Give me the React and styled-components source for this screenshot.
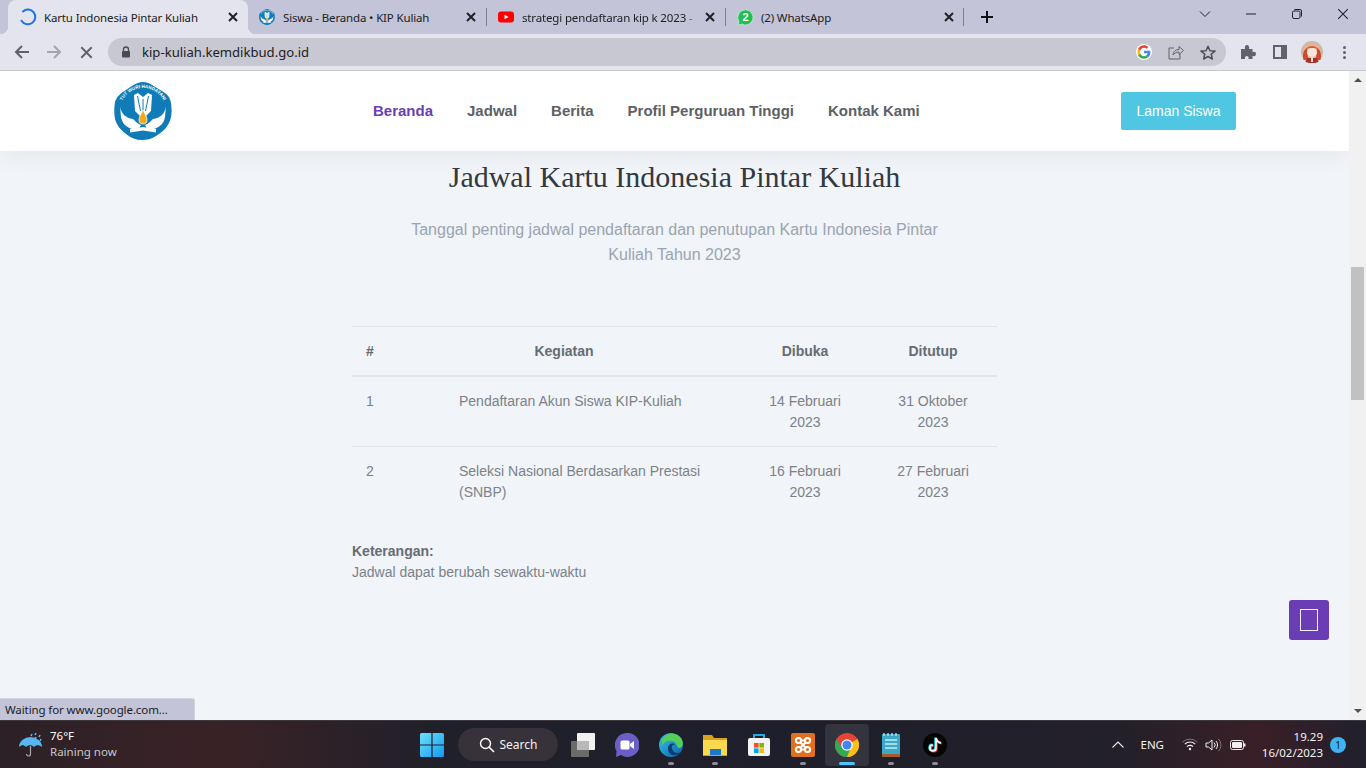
import React from "react"
import styled, { createGlobalStyle } from "styled-components"

const GlobalStyle = createGlobalStyle`
  html, body { margin: 0; padding: 0; height: 100%; overflow: hidden; }
  body { font-family: "Liberation Sans", Arial, sans-serif; }
  * { box-sizing: border-box; }
`

const tabs = [
  { title: "Kartu Indonesia Pintar Kuliah", icon: "spinner", active: true },
  { title: "Siswa - Beranda • KIP Kuliah", icon: "logo" },
  { title: "strategi pendaftaran kip k 2023 -", icon: "youtube", fade: true, divider: true },
  { title: "(2) WhatsApp", icon: "whatsapp", divider: true, last: true },
]

const menu = ["Beranda", "Jadwal", "Berita", "Profil Perguruan Tinggi", "Kontak Kami"]

const rows = [
  { no: 1, name: "Pendaftaran Akun Siswa KIP-Kuliah", open: "14 Februari 2023", close: "31 Oktober 2023" },
  { no: 2, name: "Seleksi Nasional Berdasarkan Prestasi (SNBP)", open: "16 Februari 2023", close: "27 Februari 2023" },
]

const Logo = ({ size = 58 }) => (
  <svg width={size} height={size} viewBox="0 0 58 58">
    <path d="M29 0 C35 0 41 5 48 9 C53 12 56 15 57 21 C58 28 58 35 55 41 C52 47 48 50 42 54 C37 57 33 58 28 58 C22 58 17 56 12 52 C7 48 3 44 1 37 C0 31 0 26 1 20 C3 14 7 11 12 8 C18 4 23 0 29 0 Z" fill="#0f7cb8" />
    <defs>
      <path id="logoArc" d="M6 29 A23 23 0 0 1 52 29" />
    </defs>
    <text fontFamily="Liberation Sans" fontSize="4.6" fontWeight="700" fill="#fff">
      <textPath href="#logoArc" startOffset="50%" textAnchor="middle">TUT WURI HANDAYANI</textPath>
    </text>
    <path d="M20 13 L24 11 L29 15 L34 11 L38 13 L37 29 L29 37 L21 29 Z" fill="#fff" />
    <path d="M23.5 14 L26.5 29 M29 17 V30 M34.5 14 L31.5 29" stroke="#0f7cb8" strokeWidth="1" />
    <path d="M6 24 C7 32 12 36 19 37 C22 40 24 42 27 43 L24 48 C16 48 8 43 7 35 Z" fill="#fff" />
    <path d="M52 24 C51 32 46 36 39 37 C36 40 34 42 31 43 L34 48 C42 48 50 43 51 35 Z" fill="#fff" />
    <path d="M29 28 C31 32 33 35 33 38 C33 41 31 42 29 42 C27 42 25 41 25 38 C25 35 27 32 29 28 Z" fill="#f5a81c" stroke="#fff" strokeWidth=".8" />
    <path d="M16 47 L29 45 L42 47 L42 50.5 L29 48.5 L16 50.5 Z" fill="#fff" />
  </svg>
)

const Favicon = ({ type }) => {
  if (type === "spinner") {
    return (
      <svg width="18" height="18" viewBox="0 0 18 18">
        <path d="M5 2.6 A7.4 7.4 0 1 1 2 11.5" fill="none" stroke="#1a73e8" strokeWidth="2" strokeLinecap="round" transform="rotate(-10 9 9)" />
      </svg>
    )
  }
  if (type === "logo") return <Logo size={16} />
  if (type === "youtube") {
    return (
      <svg width="18" height="18" viewBox="0 0 18 18">
        <rect x="1" y="3.5" width="16" height="11" rx="3" fill="#f00" />
        <path d="M7.5 6.8 L11.5 9 L7.5 11.2 Z" fill="#fff" />
      </svg>
    )
  }
  return (
    <svg width="17" height="17" viewBox="0 0 17 17">
      <path d="M8.5 .8 A7.6 7.6 0 1 1 4.7 15 L.8 16.2 L2 12.4 A7.6 7.6 0 0 1 8.5 .8 Z" fill="#1fc04f" stroke="#e8f8ec" strokeWidth=".6" />
      <text x="8.5" y="12.2" textAnchor="middle" fontFamily="Liberation Sans" fontWeight="700" fontSize="11" fill="#fff">2</text>
    </svg>
  )
}

const CloseIcon = ({ size = 10, color = "#202124", weight = 2 }) => (
  <svg width={size} height={size} viewBox="0 0 10 10">
    <path d="M1 1 L9 9 M9 1 L1 9" stroke={color} strokeWidth={weight} fill="none" />
  </svg>
)

const Avatar = () => (
  <svg width="22" height="22" viewBox="0 0 22 22">
    <circle cx="11" cy="11" r="11" fill="#cdb9a6" />
    <path d="M4 6 C6 2 16 2 18 6 L20 16 L2 16 Z" fill="#e9b49c" />
    <path d="M2.5 19 C1 13 3 8 6 7 L7 17 L5 19 Z M19.5 19 C21 13 19 8 16 7 L15 17 L17 19 Z" fill="#d2492c" />
    <path d="M5 8 C7 4 15 4 17 8 C14 6.5 8 6.5 5 8 Z" fill="#de5b39" />
    <ellipse cx="11" cy="11.5" rx="5" ry="4.5" fill="#f2e7de" />
    <path d="M6 17 H16 L17.5 21 C14 22.5 8 22.5 4.5 21 Z" fill="#a82e28" />
    <path d="M10 16 H12 V21 H10 Z" fill="#eadfd5" />
  </svg>
)

const WindowsIcon = () => (
  <svg width="24" height="24" viewBox="0 0 24 24">
    <defs>
      <linearGradient id="winGrad" x1="0" y1="0" x2="1" y2="1">
        <stop offset="0" stopColor="#6fe0fb" />
        <stop offset="1" stopColor="#0f9bf0" />
      </linearGradient>
    </defs>
    <path d="M0 1.5 A1.5 1.5 0 0 1 1.5 0 H11.4 V11.4 H0 Z M12.6 0 H22.5 A1.5 1.5 0 0 1 24 1.5 V11.4 H12.6 Z M0 12.6 H11.4 V24 H1.5 A1.5 1.5 0 0 1 0 22.5 Z M12.6 12.6 H24 V22.5 A1.5 1.5 0 0 1 22.5 24 H12.6 Z" fill="url(#winGrad)" />
  </svg>
)

const appIcons = {
  taskview: (
    <svg width="24" height="24" viewBox="0 0 24 24">
      <rect x="0" y="8" width="18" height="16" rx="1" fill="#6b6b6b" />
      <rect x="6" y="0" width="18" height="17" rx="1" fill="#f1f1f1" />
      <rect x="6" y="8" width="12" height="9" fill="#b9b9b9" />
    </svg>
  ),
  meet: (
    <svg width="24" height="24" viewBox="0 0 24 24">
      <path d="M12 0 A12 12 0 1 1 6 22 L1 24 L1.5 18 A12 12 0 0 1 12 0 Z" fill="#6a5fc4" />
      <rect x="5.5" y="7.5" width="9" height="9" rx="1.5" fill="#fff" />
      <path d="M15 11 L19 8 V16 L15 13 Z" fill="#fff" />
    </svg>
  ),
  edge: (
    <svg width="24" height="24" viewBox="0 0 24 24">
      <defs>
        <linearGradient id="edgeGrad" x1="0" y1="0" x2="1" y2="1">
          <stop offset="0" stopColor="#37c7e8" />
          <stop offset="1" stopColor="#0b5ea8" />
        </linearGradient>
      </defs>
      <circle cx="12" cy="12" r="12" fill="url(#edgeGrad)" />
      <path d="M3 7 C6 0 17 -2 22 5 C25 9 24 15 20 15 C17 15 19 9 13 8 C8 7 4 9 3 13 Z" fill="#54d05a" />
      <path d="M9 15 C9 11 14 9 16 12 C12 11 12 16 15 19 C18 21 21 20 22 18 C19 24 9 24 9 15 Z" fill="#0c3a74" />
    </svg>
  ),
  folder: (
    <svg width="24" height="24" viewBox="0 0 24 24">
      <path d="M0 2 H9 L11 5 H24 V23 H0 Z" fill="#d9a21f" />
      <path d="M0 7 H24 V23 H0 Z" fill="#fbd84e" />
      <path d="M7 16 H18 V23 H7 Z" fill="#1b79c9" />
      <path d="M0 22 H24 V23 H0 Z" fill="#d8a21d" />
    </svg>
  ),
  store: (
    <svg width="24" height="24" viewBox="0 0 24 24">
      <path d="M7 6 V2 H17 V6" fill="none" stroke="#27a9e6" strokeWidth="2" />
      <rect x="1" y="5" width="22" height="18" rx="2" fill="#f3f3f3" />
      <rect x="7" y="10" width="4.6" height="4.6" fill="#f25022" />
      <rect x="12.4" y="10" width="4.6" height="4.6" fill="#7fba00" />
      <rect x="7" y="15.4" width="4.6" height="4.6" fill="#00a4ef" />
      <rect x="12.4" y="15.4" width="4.6" height="4.6" fill="#ffb900" />
    </svg>
  ),
  xampp: (
    <svg width="24" height="24" viewBox="0 0 24 24">
      <rect width="24" height="24" rx="2" fill="#e0701f" />
      <circle cx="7.5" cy="7.5" r="2.6" fill="none" stroke="#fff" strokeWidth="2" />
      <circle cx="16.5" cy="7.5" r="2.6" fill="none" stroke="#fff" strokeWidth="2" />
      <circle cx="7.5" cy="16.5" r="2.6" fill="none" stroke="#fff" strokeWidth="2" />
      <circle cx="16.5" cy="16.5" r="2.6" fill="none" stroke="#fff" strokeWidth="2" />
      <path d="M10 7.5 H14 M10 16.5 H14 M9.5 9.5 L12 12 L14.5 9.5 M9.5 14.5 L12 12 L14.5 14.5" fill="none" stroke="#fff" strokeWidth="2" />
    </svg>
  ),
  chrome: (
    <svg width="24" height="24" viewBox="0 0 24 24">
      <circle cx="12" cy="12" r="12" fill="#e94335" />
      <path d="M12 12 L22.4 6 A12 12 0 0 1 12 24 Z" fill="#fbc116" />
      <path d="M16 14 L12 24 A12 12 0 0 1 1.6 6 L7 15 Z" fill="#34a853" />
      <circle cx="12" cy="12" r="5.8" fill="#fff" />
      <circle cx="12" cy="12" r="4.5" fill="#4285f4" />
    </svg>
  ),
  notepad: (
    <svg width="24" height="24" viewBox="0 0 24 24">
      <rect x="3" y="1" width="18" height="22" rx="1" fill="#3aa8c9" />
      <path d="M3 21 H21 V24 H3 Z" fill="#a65c26" />
      <path d="M6 7 H18 M6 11 H18 M6 15 H18" stroke="#c7ecf5" strokeWidth="1.4" />
      <path d="M5 0 V3 M9 0 V3 M13 0 V3 M17 0 V3" stroke="#d8eef4" strokeWidth="1.2" />
    </svg>
  ),
  tiktok: (
    <svg width="24" height="24" viewBox="0 0 24 24">
      <circle cx="12" cy="12" r="12" fill="#050505" />
      <path d="M13 5 V15 A3 3 0 1 1 10 12 M13 5 C13.5 8 15.5 9.5 18 10" fill="none" stroke="#25f4ee" strokeWidth="2" transform="translate(-.7 -.5)" />
      <path d="M13 5 V15 A3 3 0 1 1 10 12 M13 5 C13.5 8 15.5 9.5 18 10" fill="none" stroke="#fe2c55" strokeWidth="2" transform="translate(.7 .5)" />
      <path d="M13 5 V15 A3 3 0 1 1 10 12 M13 5 C13.5 8 15.5 9.5 18 10" fill="none" stroke="#fff" strokeWidth="1.6" />
    </svg>
  ),
}

const taskbarApps = [
  { name: "taskview" },
  { name: "meet" },
  { name: "edge", open: true },
  { name: "folder", open: true },
  { name: "store" },
  { name: "xampp", open: true },
  { name: "chrome", open: true, current: true },
  { name: "notepad", open: true },
  { name: "tiktok", open: true },
]

const App = () => {
  return (
    <Screen>
      <GlobalStyle />
      <TabStrip>
        {tabs.map((tab) => (
          <Tab key={tab.title} $active={tab.active} $divider={tab.divider} $last={tab.last}>
            <TabIcon><Favicon type={tab.icon} /></TabIcon>
            <TabTitle $fade={tab.fade}>{tab.title}</TabTitle>
            <TabClose><CloseIcon /></TabClose>
          </Tab>
        ))}
        <NewTab>
          <svg width="14" height="14" viewBox="0 0 14 14">
            <path d="M7 1 V13 M1 7 H13" stroke="#111" strokeWidth="2" />
          </svg>
        </NewTab>
        <WindowControls>
          <WindowButton>
            <svg width="12" height="8" viewBox="0 0 12 8"><path d="M1 1.5 L6 6.5 L11 1.5" fill="none" stroke="#222" /></svg>
          </WindowButton>
          <WindowButton>
            <svg width="12" height="2" viewBox="0 0 12 2"><path d="M1 1 H11" stroke="#222" /></svg>
          </WindowButton>
          <WindowButton>
            <svg width="12" height="12" viewBox="0 0 12 12">
              <rect x="1.5" y="3" width="7.5" height="7.5" rx="1.5" fill="none" stroke="#222" />
              <path d="M3.5 1.5 H9 A1.5 1.5 0 0 1 10.5 3 V8.5" fill="none" stroke="#222" />
            </svg>
          </WindowButton>
          <WindowButton>
            <CloseIcon size={12} color="#222" weight={0.9} />
          </WindowButton>
        </WindowControls>
      </TabStrip>

      <Toolbar>
        <ToolButton>
          <svg width="18" height="18" viewBox="0 0 18 18"><path d="M16 9 H3 M9 3 L3 9 L9 15" fill="none" stroke="#5f6368" strokeWidth="2" /></svg>
        </ToolButton>
        <ToolButton>
          <svg width="18" height="18" viewBox="0 0 18 18"><path d="M2 9 H15 M9 3 L15 9 L9 15" fill="none" stroke="#a4a5ab" strokeWidth="2" /></svg>
        </ToolButton>
        <ToolButton>
          <CloseIcon size={13} color="#5f6368" weight={1.5} />
        </ToolButton>
        <Omnibox>
          <svg width="10" height="12" viewBox="0 0 10 12">
            <path d="M2.5 5 V3.5 A2.5 2.5 0 0 1 7.5 3.5 V5" fill="none" stroke="#494b50" strokeWidth="1.3" />
            <rect x="1" y="5" width="8" height="6.5" rx="1" fill="#494b50" />
          </svg>
          <Url>kip-kuliah.kemdikbud.go.id</Url>
          <OmniIcons>
            <GoogleBadge>
              <svg width="14" height="14" viewBox="0 0 24 24">
                <path d="M23 12.3 C23 11.4 22.9 10.8 22.8 10 H12 V14.2 H18.3 C18 15.9 17 17.2 15.6 18.1 L19.3 21 C21.6 19 23 16 23 12.3 Z" fill="#4285f4" />
                <path d="M12 23.5 C15.1 23.5 17.6 22.5 19.3 21 L15.6 18.1 C14.6 18.8 13.4 19.2 12 19.2 C9 19.2 6.5 17.2 5.6 14.5 L1.8 17.4 C3.7 21.1 7.5 23.5 12 23.5 Z" fill="#34a853" />
                <path d="M5.6 14.5 C5.1 13 5.1 11.2 5.6 9.6 L1.8 6.6 C.3 9.8 .3 14.3 1.8 17.4 Z" fill="#fbbc05" />
                <path d="M12 4.8 C13.7 4.8 15.1 5.4 16.3 6.5 L19.5 3.3 C17.5 1.5 15 .5 12 .5 C7.5 .5 3.7 2.9 1.8 6.6 L5.6 9.6 C6.5 6.8 9 4.8 12 4.8 Z" fill="#ea4335" />
              </svg>
            </GoogleBadge>
            <svg width="16" height="15" viewBox="0 0 16 15">
              <path d="M6 3 H1 V14 H12 V9 M5 10 C5.5 6 8 4.5 11 4.5 V1.5 L15.5 5.5 L11 9.5 V7 C8.5 7 6.5 8 5 10 Z" fill="none" stroke="#5f6368" />
            </svg>
            <svg width="16" height="15" viewBox="0 0 16 15">
              <path d="M8 1.2 L10 5.7 L15 6.1 L11.2 9.3 L12.4 14 L8 11.5 L3.6 14 L4.8 9.3 L1 6.1 L6 5.7 Z" fill="none" stroke="#4d4f54" strokeWidth="1.5" strokeLinejoin="round" />
            </svg>
          </OmniIcons>
        </Omnibox>
        <ExtensionIcons>
          <ExtensionSlot>
            <svg width="16" height="16" viewBox="0 0 16 16">
              <path d="M1 5 H5 C4.5 2.5 5.5 1 7 1 C8.5 1 9.5 2.5 9 5 H12.5 V8 C15 7.5 16 8.5 16 10 C16 11.5 15 12.5 12.5 12 V15 H8.5 C9 13 8 12 6.8 12 C5.6 12 4.6 13 5 15 H1 Z" fill="#5f6368" />
            </svg>
          </ExtensionSlot>
          <ExtensionSlot>
            <svg width="14" height="14" viewBox="0 0 14 14">
              <rect x="1" y="1" width="12" height="12" fill="none" stroke="#5f6368" strokeWidth="2" />
              <rect x="8" y="1" width="5" height="12" fill="#5f6368" />
            </svg>
          </ExtensionSlot>
          <ExtensionSlot><Avatar /></ExtensionSlot>
          <ExtensionSlot><MenuDots><i /><i /><i /></MenuDots></ExtensionSlot>
        </ExtensionIcons>
      </Toolbar>

      <Viewport>
        <Page>
          <Header>
            <LogoLink><Logo /></LogoLink>
            <NavMenu>
              {menu.map((item, index) => (
                <NavLink key={item} $active={index === 0}>{item}</NavLink>
              ))}
            </NavMenu>
            <LoginButton>Laman Siswa</LoginButton>
          </Header>
          <Section>
            <Heading>Jadwal Kartu Indonesia Pintar Kuliah</Heading>
            <Lead>Tanggal penting jadwal pendaftaran dan penutupan Kartu Indonesia Pintar Kuliah Tahun 2023</Lead>
            <Table>
              <colgroup>
                <col width="35" />
                <col width="354" />
                <col width="128" />
                <col width="128" />
              </colgroup>
              <thead>
                <tr>
                  <Th $left>#</Th>
                  <Th>Kegiatan</Th>
                  <Th>Dibuka</Th>
                  <Th>Ditutup</Th>
                </tr>
              </thead>
              <tbody>
                {rows.map((row) => (
                  <tr key={row.no}>
                    <Td $left>{row.no}</Td>
                    <NameCell>{row.name}</NameCell>
                    <Td>{row.open}</Td>
                    <Td>{row.close}</Td>
                  </tr>
                ))}
              </tbody>
            </Table>
            <Note>
              <strong>Keterangan:</strong>
              <br />
              Jadwal dapat berubah sewaktu-waktu
            </Note>
          </Section>
          <FloatButton><FloatGlyph /></FloatButton>
        </Page>
        <Scrollbar>
          <ScrollArrow $up />
          <ScrollThumb />
          <ScrollArrow />
        </Scrollbar>
        <StatusBubble>Waiting for www.google.com...</StatusBubble>
      </Viewport>

      <Taskbar>
        <Weather>
          <svg width="26" height="26" viewBox="0 0 26 26">
            <path d="M1 15 A11.5 10 0 0 1 24 15 C21 12.5 18 12.5 16 15 C14 12.5 10 12.5 8 15 C6 12.5 3.5 12.5 1 15 Z" fill="#57b5f2" />
            <path d="M12.5 14 V22 A2 2 0 0 1 8.5 22" fill="none" stroke="#a9a9a9" strokeWidth="1.2" />
            <path d="M14 2 L13 4 M18 1 L17 3 M22 3 L21 5 M18 5 L17 7 M23 7 L22 9" stroke="#58b4ef" strokeWidth="1.6" />
          </svg>
          <WeatherText>
            <Temp>76°F</Temp>
            <Condition>Raining now</Condition>
          </WeatherText>
        </Weather>
        <TaskCenter>
          <StartButton><WindowsIcon /></StartButton>
          <SearchPill>
            <svg width="16" height="16" viewBox="0 0 16 16">
              <circle cx="6.5" cy="6.5" r="5" fill="none" stroke="#fff" strokeWidth="1.4" />
              <path d="M10.2 10.2 L15 15" stroke="#fff" strokeWidth="1.6" />
            </svg>
            Search
          </SearchPill>
          <AppList>
            {taskbarApps.map((app) => (
              <AppButton key={app.name} $current={app.current}>
                {appIcons[app.name]}
                {app.open && <AppDot $current={app.current} />}
              </AppButton>
            ))}
          </AppList>
        </TaskCenter>
        <Tray>
          <svg width="12" height="7" viewBox="0 0 12 7"><path d="M.5 6.5 L6 1 L11.5 6.5" fill="none" stroke="#eee" strokeWidth="1.1" /></svg>
          <Lang>ENG</Lang>
          <TrayIcons>
            <TrayIcon>
              <svg width="16" height="13" viewBox="0 0 16 13">
                <path d="M.6 4.2 A10.4 10.4 0 0 1 15.4 4.2" fill="none" stroke="#77727a" />
                <path d="M2.8 6.2 A7.4 7.4 0 0 1 13.2 6.2 M5 8.6 A4.2 4.2 0 0 1 11 8.6" fill="none" stroke="#f0f0f0" strokeWidth="1.1" />
                <circle cx="8" cy="11" r="1.2" fill="#f0f0f0" />
              </svg>
            </TrayIcon>
            <TrayIcon>
              <svg width="17" height="14" viewBox="0 0 17 14">
                <path d="M1 5 H3.5 L7 2 V12 L3.5 9 H1 Z" fill="none" stroke="#f0f0f0" />
                <path d="M9 4.5 A3.5 3.5 0 0 1 9 9.5 M11 3 A6 6 0 0 1 11 11" fill="none" stroke="#f0f0f0" />
                <path d="M13.5 1 A8.5 8.5 0 0 1 13.5 13" fill="none" stroke="#77727a" />
              </svg>
            </TrayIcon>
            <TrayIcon>
              <svg width="16" height="10" viewBox="0 0 16 10">
                <rect x=".5" y=".5" width="13" height="9" rx="2" fill="none" stroke="#f0f0f0" />
                <rect x="2" y="2" width="10" height="6" rx="1" fill="#f0f0f0" />
                <rect x="14" y="3.5" width="1.5" height="3" fill="#f0f0f0" />
              </svg>
            </TrayIcon>
          </TrayIcons>
          <Clock>
            <span>19.29</span>
            <span>16/02/2023</span>
          </Clock>
          <NotifyBadge>1</NotifyBadge>
        </Tray>
      </Taskbar>
    </Screen>
  )
}
export default App

const Screen = styled.div`
  width: 1366px;
  height: 768px;
  display: flex;
  flex-direction: column;
  overflow: hidden;
  background: #f1f4f8;
`

const TabStrip = styled.div`
  height: 34px;
  flex: none;
  display: flex;
  padding-left: 8px;
  background: #c3c4d7;
`

const Tab = styled.div`
  position: relative;
  width: ${(p) => (p.$active ? "240px" : "239px")};
  margin-right: ${(p) => (p.$active ? "-1px" : "0")};
  display: flex;
  align-items: center;
  padding: 0 7px 0 11px;
  border-radius: 8px 8px 0 0;
  background: ${(p) => (p.$active ? "#e3e4ee" : "transparent")};

  ${(p) => p.$divider && `
    &::before {
      content: "";
      position: absolute;
      left: 0;
      top: 8px;
      height: 18px;
      width: 1px;
      background: #7f808c;
    }
  `}
  ${(p) => p.$last && `
    &::after {
      content: "";
      position: absolute;
      right: 0;
      top: 8px;
      height: 18px;
      width: 1px;
      background: #7f808c;
    }
  `}
  ${(p) => p.$active && `
    &::before, &::after {
      content: "";
      position: absolute;
      bottom: 0;
      width: 8px;
      height: 8px;
    }
    &::before {
      left: -8px;
      background: radial-gradient(circle at 0 0, transparent 8px, #e3e4ee 8.5px);
    }
    &::after {
      right: -8px;
      background: radial-gradient(circle at 100% 0, transparent 8px, #e3e4ee 8.5px);
    }
  `}
`

const TabIcon = styled.span`
  width: 18px;
  height: 18px;
  flex: none;
  display: flex;
  align-items: center;
  justify-content: center;
  margin-right: 7px;
`

const TabTitle = styled.span`
  flex: 1;
  min-width: 0;
  overflow: hidden;
  white-space: nowrap;
  font: 11.5px "Noto Sans", sans-serif;
  letter-spacing: -0.15px;
  color: #202124;
  ${(p) => p.$fade && "mask-image: linear-gradient(to right, #000 163px, rgba(0, 0, 0, 0.35) 172px);"}
`

const TabClose = styled.span`
  width: 16px;
  flex: none;
  display: flex;
  justify-content: center;
`

const NewTab = styled.span`
  width: 45px;
  display: flex;
  align-items: center;
  justify-content: center;
`

const WindowControls = styled.div`
  margin-left: auto;
  display: flex;
`

const WindowButton = styled.span`
  width: 46px;
  padding-bottom: 6px;
  display: flex;
  align-items: center;
  justify-content: center;
`

const Toolbar = styled.div`
  height: 37px;
  flex: none;
  display: flex;
  align-items: center;
  padding-left: 6px;
  background: #e3e4ee;
  border-bottom: 1px solid #c6c6cf;
`

const ToolButton = styled.span`
  width: 32px;
  display: flex;
  align-items: center;
  justify-content: center;
`

const Omnibox = styled.div`
  width: 1118px;
  height: 28px;
  margin-left: 6px;
  display: flex;
  align-items: center;
  padding: 0 10px 0 13px;
  border-radius: 14px;
  background: #c8c8d2;
`

const Url = styled.span`
  margin-left: 11px;
  font: 13.1px "Noto Sans", sans-serif;
  color: #202124;
`

const OmniIcons = styled.div`
  margin-left: auto;
  display: flex;
  align-items: center;
  gap: 16px;
`

const GoogleBadge = styled.span`
  width: 16px;
  height: 16px;
  display: flex;
  align-items: center;
  justify-content: center;
  border-radius: 50%;
  background: #fff;
`

const ExtensionIcons = styled.div`
  flex: 1;
  display: flex;
  align-items: center;
  padding-left: 6px;
`

const ExtensionSlot = styled.span`
  width: 32px;
  display: flex;
  align-items: center;
  justify-content: center;
`

const MenuDots = styled.span`
  display: flex;
  flex-direction: column;
  gap: 2px;

  i {
    width: 3px;
    height: 3px;
    border-radius: 50%;
    background: #5f6368;
  }
`

const Viewport = styled.div`
  position: relative;
  flex: 1;
  min-height: 0;
  display: flex;
`

const Page = styled.div`
  position: relative;
  flex: 1;
  min-width: 0;
  overflow: hidden;
  background: #f1f4f8;
`

const Header = styled.header`
  position: relative;
  height: 80px;
  display: flex;
  align-items: center;
  padding: 0 113px 0 114px;
  background: #fff;
  box-shadow: 0 2px 28px rgba(0, 0, 0, 0.07);
`

const LogoLink = styled.a`
  display: flex;
  width: 58px;
`

const NavMenu = styled.nav`
  display: flex;
  gap: 34px;
  margin-left: 201px;
  padding-bottom: 2px;
`

const NavLink = styled.a`
  font-size: 15px;
  font-weight: 700;
  color: ${(p) => (p.$active ? "#6a3db5" : "#5c6166")};
`

const LoginButton = styled.a`
  margin-left: auto;
  width: 115px;
  height: 38px;
  padding-bottom: 1px;
  display: flex;
  align-items: center;
  justify-content: center;
  border-radius: 2px;
  background: #4fc7e3;
  color: #fff;
  font-size: 14px;
`

const Section = styled.section`
  width: 645px;
  margin: 0 auto;
  padding-top: 8px;
`

const Heading = styled.h2`
  margin: 0;
  text-align: center;
  font: 400 30px/36px "Liberation Serif", serif;
  color: #323a40;
`

const Lead = styled.p`
  width: 560px;
  margin: 22px auto 59px;
  text-align: center;
  font-size: 16px;
  line-height: 25px;
  color: #9aa5b1;
`

const Table = styled.table`
  width: 645px;
  table-layout: fixed;
  border-collapse: collapse;
  font-size: 14px;
  line-height: 21px;
  color: #7b8289;
`

const Th = styled.th`
  padding: 14px 14px 13px;
  text-align: ${(p) => (p.$left ? "left" : "center")};
  font-weight: 700;
  color: #656d75;
  border-top: 1px solid #e1e5ea;
  border-bottom: 2px solid #e1e5ea;
`

const Td = styled.td`
  padding: 14px 14px 13px;
  vertical-align: top;
  text-align: ${(p) => (p.$left ? "left" : "center")};
  border-top: 1px solid #e1e5ea;
`

const NameCell = styled(Td)`
  padding-left: 72px;
  text-align: left;
`

const Note = styled.p`
  margin: 25px 0 0;
  font-size: 14px;
  line-height: 21px;
  color: #7b8289;

  strong {
    color: #656d75;
  }
`

const FloatButton = styled.a`
  position: absolute;
  left: 1289px;
  top: 529px;
  width: 40px;
  height: 40px;
  display: flex;
  align-items: center;
  justify-content: center;
  border-radius: 3px;
  background: #6a3db5;
`

const FloatGlyph = styled.span`
  width: 18px;
  height: 22px;
  border: 1px solid #f2eefa;
`

const Scrollbar = styled.div`
  width: 17px;
  flex: none;
  display: flex;
  flex-direction: column;
  align-items: center;
  background: #f1f1f1;
`

const ScrollArrow = styled.span`
  width: 0;
  height: 0;
  border-left: 4px solid transparent;
  border-right: 4px solid transparent;
  ${(p) => (p.$up
    ? "border-bottom: 4px solid #505050; margin-top: 7px;"
    : "border-top: 4px solid #505050; margin-top: auto; margin-bottom: 7px;")}
`

const ScrollThumb = styled.span`
  width: 13px;
  height: 133px;
  margin-top: 185px;
  background: #c1c1c1;
`

const StatusBubble = styled.div`
  position: absolute;
  left: 0;
  bottom: 0;
  width: 195px;
  height: 22px;
  padding-left: 5px;
  font: 11.5px/22px "Noto Sans", sans-serif;
  letter-spacing: -0.1px;
  color: #202124;
  background: #c3c4d7;
  border-top: 1px solid #d2d3dc;
  border-right: 1px solid #d2d3dc;
  border-top-right-radius: 3px;
`

const Taskbar = styled.footer`
  height: 48px;
  flex: none;
  display: flex;
  align-items: center;
  border-top: 1px solid #3c383d;
  background: linear-gradient(90deg, #2b2127 0%, #3a2226 16%, #20202a 32%, #1e1f2a 60%, #232029 82%, #3a1f27 92%, #20202c 100%);
`

const Weather = styled.div`
  width: 432px;
  display: flex;
  align-items: center;
  gap: 6px;
  padding-left: 18px;
  flex: none;
  margin-right: -12px;
`

const WeatherText = styled.div`
  display: flex;
  flex-direction: column;
  padding-bottom: 2px;
  font: 11.5px/16px "Noto Sans", sans-serif;
`

const Temp = styled.span`
  color: #fff;
`

const Condition = styled.span`
  color: #c9c7c9;
`

const TaskCenter = styled.div`
  display: flex;
  align-items: center;
`

const StartButton = styled.span`
  width: 26px;
  display: flex;
  margin-right: 12px;
`

const SearchPill = styled.span`
  width: 100px;
  height: 33px;
  display: flex;
  align-items: center;
  justify-content: center;
  gap: 5px;
  border-radius: 17px;
  background: #37313a;
  color: #f2f2f2;
  font: 12px "Noto Sans", sans-serif;
`

const AppList = styled.div`
  display: flex;
  margin-left: 3px;
`

const AppButton = styled.span`
  position: relative;
  width: 44px;
  height: 42px;
  display: flex;
  align-items: center;
  justify-content: center;
  border-radius: 4px;
  background: ${(p) => (p.$current ? "#34343e" : "transparent")};
`

const AppDot = styled.i`
  position: absolute;
  left: 50%;
  bottom: 1px;
  width: ${(p) => (p.$current ? "16px" : "6px")};
  height: 3px;
  transform: translateX(-50%);
  border-radius: 2px;
  background: ${(p) => (p.$current ? "#4cc2ff" : "#8e8d93")};
`

const Tray = styled.div`
  margin-left: auto;
  display: flex;
  align-items: center;
  padding-right: 20px;
  color: #f2f2f2;
`

const Lang = styled.span`
  margin: 0 14px 0 16px;
  font: 11.5px "Noto Sans", sans-serif;
`

const TrayIcons = styled.div`
  display: flex;
  gap: 1px;
`

const TrayIcon = styled.span`
  width: 23px;
  display: flex;
  align-items: center;
  justify-content: center;
`

const Clock = styled.div`
  display: flex;
  flex-direction: column;
  align-items: flex-end;
  width: 72px;
  margin-left: 2px;
  font: 11.5px/16px "Noto Sans", sans-serif;
`

const NotifyBadge = styled.span`
  width: 16px;
  height: 16px;
  margin-left: 7px;
  display: flex;
  align-items: center;
  justify-content: center;
  border-radius: 50%;
  background: #3fb4f2;
  color: #16222c;
  font: 10px "Noto Sans", sans-serif;
`
